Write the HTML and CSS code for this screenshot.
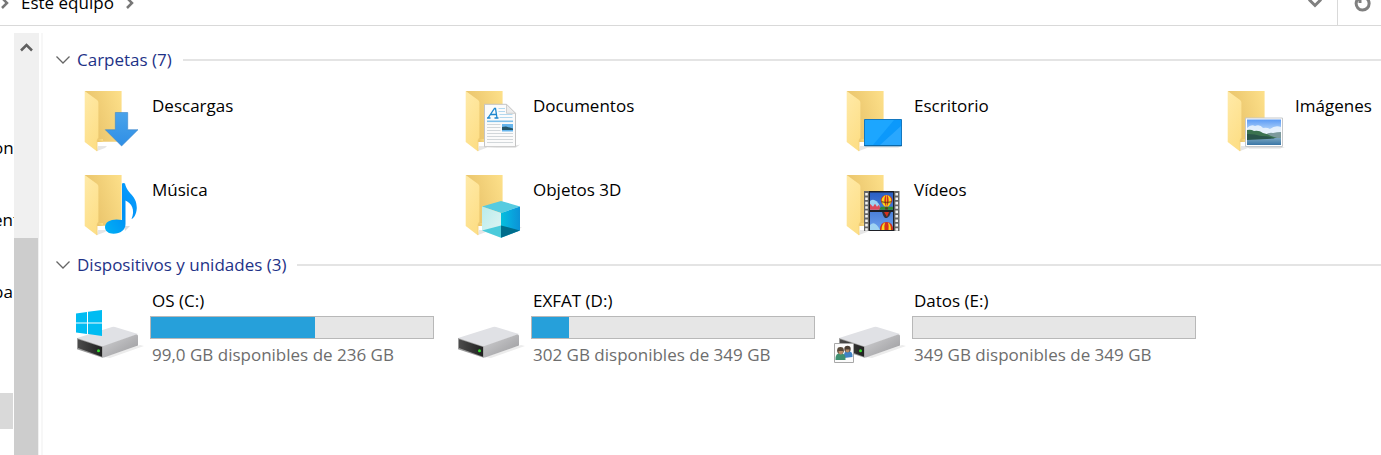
FILE: index.html
```html
<!DOCTYPE html>
<html lang="es">
<head>
  <meta charset="UTF-8">
  <meta name="viewport" content="width=device-width, initial-scale=1.0">
  <title>Este equipo</title>
  <link rel="stylesheet" href="styles.css">
</head>
<body>
  <!-- shared shapes -->
  <svg class="defs" aria-hidden="true">
    <defs>
      <linearGradient id="folderBack" x1="0" y1="0.4" x2="1" y2="0">
        <stop offset="0.1" stop-color="#eac56c"/>
        <stop offset="1" stop-color="#fde08a"/>
      </linearGradient>
      <linearGradient id="folderFront" x1="0" y1="0" x2="0.4" y2="1">
        <stop offset="0" stop-color="#ffeaa8"/>
        <stop offset="1" stop-color="#fddf88"/>
      </linearGradient>
      <linearGradient id="arrowBlue" x1="0" y1="0" x2="0" y2="1">
        <stop offset="0" stop-color="#4aa3ea"/>
        <stop offset="1" stop-color="#2f8fe6"/>
      </linearGradient>
      <linearGradient id="noteBlue" x1="0" y1="1" x2="1" y2="0">
        <stop offset="0" stop-color="#00b2f5"/>
        <stop offset="0.5" stop-color="#0090f5"/>
        <stop offset="1" stop-color="#0aa0ff"/>
      </linearGradient>
      <linearGradient id="sky" x1="0" y1="0" x2="0" y2="1">
        <stop offset="0" stop-color="#5b9bf5"/>
        <stop offset="0.6" stop-color="#d8ecfb"/>
      </linearGradient>
      <linearGradient id="lake" x1="0" y1="0" x2="0" y2="1">
        <stop offset="0" stop-color="#7fa9c2"/>
        <stop offset="1" stop-color="#3a76a6"/>
      </linearGradient>
      <linearGradient id="night" x1="0" y1="0" x2="0" y2="1">
        <stop offset="0" stop-color="#2b5fc4"/>
        <stop offset="1" stop-color="#6ba0ee"/>
      </linearGradient>
      <linearGradient id="cubeLeft" x1="0" y1="0" x2="1" y2="1">
        <stop offset="0" stop-color="#b9ecec"/>
        <stop offset="1" stop-color="#e2f5f3"/>
      </linearGradient>
      <linearGradient id="cubeRight" x1="0" y1="0" x2="1" y2="0">
        <stop offset="0" stop-color="#06bfdc"/>
        <stop offset="0.5" stop-color="#08a8de"/>
        <stop offset="1" stop-color="#0c92d6"/>
      </linearGradient>
      <linearGradient id="driveSide" x1="0" y1="0" x2="1" y2="1">
        <stop offset="0" stop-color="#d2d2d4"/>
        <stop offset="1" stop-color="#98989b"/>
      </linearGradient>
      <linearGradient id="driveFront" x1="0" y1="0" x2="1" y2="0">
        <stop offset="0" stop-color="#4c4c4c"/>
        <stop offset="1" stop-color="#202020"/>
      </linearGradient>
      <symbol id="folder" viewBox="0 0 70 70">
        <path d="M21 67l8-3 2-2h-9z" fill="#e6e6e6"/>
        <path d="M9 7h36.600v50.700H9z" fill="url(#folderBack)"/>
        <path d="M21 55h6v3h-6z" fill="url(#folderBack)"/>
        <path d="M8.700 7l12.400 9q1.300 1 1.300 2.500V54l-1.300 2v11.600L8.700 58z" fill="url(#folderFront)"/>
        <path d="M22.400 54l-1.300 2v11" fill="none" stroke="#f0cc74" stroke-width=".6"/>
      </symbol>
      <symbol id="drive" viewBox="0 0 70 78">
        <path d="M28 68l36-12 4 1-34 12z" fill="#ececec"/>
        <path d="M1 49l35-11q1.500-.5 3 0l23 7-35.500 13z" fill="#e0e1e5"/>
        <path d="M26 57.500L60 45.500q2-.5 2 1.500v9.500L28 68.500h-2z" fill="url(#driveSide)"/>
        <path d="M1 49l25.600 8.500v11.300L1 60.300z" fill="#9b9b9b"/>
        <path d="M2 50.300L26 58v9.800L2 59z" fill="url(#driveFront)"/>
        <circle cx="22.500" cy="61.700" r="1.500" fill="#35e02e"/>
      </symbol>
      <symbol id="balloon" viewBox="0 0 14 17">
        <path d="M7 0a6.500 6 0 0 1 6.500 6C13.500 9 10 11 9 13H5C4 11 .5 9 .5 6A6.500 6 0 0 1 7 0z" fill="#d6301c"/>
        <path d="M4.500.8C0 4 1 9 5 13h1.500C4 9 4 4 6 0zM9.500.8C14 4 13 9 9 13H7.500C10 9 10 4 8 0zM6.600 0h.8v13h-.8z" fill="#f7d71e"/>
        <path d="M1 6.500q6 2.500 12 0l-1 2q-5 1.500-10 0z" fill="#3c3110" opacity=".6"/>
        <path d="M5.500 14h3v2.500h-3z" fill="#5a3b16"/>
      </symbol>
    </defs>
  </svg>

  <header class="address-bar">
    <nav class="crumbs">
      <svg class="crumb-arrow" viewBox="0 0 10 12"><path d="M2 1l5 5-5 5"/></svg>
      <a href="#" class="crumb">Este equipo</a>
      <svg class="crumb-arrow" viewBox="0 0 10 12"><path d="M2 1l5 5-5 5"/></svg>
    </nav>
    <button class="bar-btn" aria-label="Ubicaciones anteriores">
      <svg width="16" height="12" viewBox="0 0 16 12"><path d="M2 2.500l6 6 6-6"/></svg>
    </button>
    <button class="bar-btn refresh" aria-label="Actualizar">
      <svg width="18" height="18" viewBox="0 0 18 18"><path d="M14 4.700A6.500 6.500 0 1 1 5.500 4.500M7 9V4.500H3"/></svg>
    </button>
  </header>

  <div class="window">
    <aside class="sidebar">
      <a href="#" class="nav-item">on</a>
      <a href="#" class="nav-item">ent</a>
      <a href="#" class="nav-item">pa</a>
      <span class="nav-selected"></span>
    </aside>
    <div class="scrollbar">
      <svg class="scroll-up" viewBox="0 0 13 10"><path d="M1 8.500L6.500 3 12 8.500"/></svg>
      <div class="thumb"></div>
    </div>

    <main class="content">
      <section class="group">
        <h2 class="group-title">
          <svg class="chevron" viewBox="0 0 14 8"><path d="M.5.500L7 7 13.500.500"/></svg>
          <span>Carpetas (7)</span>
        </h2>
        <div class="grid folders">
          <a href="#" class="tile">
            <svg class="icon" viewBox="0 0 70 70">
              <use href="#folder"/>
              <path d="M39.300 28.500h12.400v17.200H62L45.600 62 29.300 45.700h10z" fill="url(#arrowBlue)" stroke="#3c86cb" stroke-width=".6"/>
            </svg>
            <span>Descargas</span>
          </a>
          <a href="#" class="tile">
            <svg class="icon" viewBox="0 0 70 70">
              <use href="#folder"/>
              <path d="M57 62l6-1.500-4 3H30z" fill="#dedede"/>
              <path d="M27.500 20.300h22l9 9v33.400h-31z" fill="#fbfbfb" stroke="#c4c4c4"/>
              <path d="M49.500 20.300v9h9z" fill="#ececec" stroke="#c4c4c4" stroke-width=".8"/>
              <path d="M31 34l6.500-9.500h1L40 34M33.500 30.500h6M30 34h3.500M37.500 34h4" fill="none" stroke="#1e87cf" stroke-width="1.300"/>
              <path d="M41.500 24.500H48M41.500 27.500H48M42.500 30.500h13M42.500 33.500h13" stroke="#b3d8ee"/>
              <path d="M30 37.300h26" stroke="#7fc0ea" stroke-width="1.600"/>
              <path d="M30 40.500h13.500M30 43.500h13.500M30 46.500h13.500M30 49.500h26M30 52.500h26M30 55.500h26M30 58.500h26" stroke="#d2d7da"/>
              <path d="M45 40h11v7.500H45z" fill="#66b5ec"/>
              <path d="M45 43l4-.5 7 2v1.500H45z" fill="#24566b"/>
            </svg>
            <span>Documentos</span>
          </a>
          <a href="#" class="tile">
            <svg class="icon" viewBox="0 0 70 70">
              <use href="#folder"/>
              <path d="M27 62h38l-5 1.500H30z" fill="#dcdcdc"/>
              <path d="M26.500 35.500h37v26.300h-37z" fill="#0c99fb" stroke="#1478c0"/>
              <path d="M27 36h29L35 61h-8z" fill="#1ca6ff"/>
              <path d="M63 42v19H42z" fill="#36acff" opacity=".7"/>
              <path d="M26 61.500h38" stroke="#0b68a8"/>
            </svg>
            <span>Escritorio</span>
          </a>
          <a href="#" class="tile">
            <svg class="icon" viewBox="0 0 70 70">
              <use href="#folder"/>
              <path d="M28 63h38l-5 1.500H30z" fill="#dedede"/>
              <path d="M26.500 34h37v28.500h-37z" fill="#fff" stroke="#c5c8cb"/>
              <path d="M28 35.500h34V61H28z" fill="url(#sky)"/>
              <path d="M28 44q4-4 8-2 5-2 8 2 4-1 7 1 5-4 11-2v12H28z" fill="#eef6fd" opacity=".85"/>
              <path d="M28 53.500h34V61H28z" fill="url(#lake)"/>
              <path d="M46 51q4-3 8-2 4-1 8-1v6H42z" fill="#7c9a9c"/>
              <path d="M28 46q4-1 7 1 5-1 9 2 5 1 8 3l6 2H28z" fill="#3b7350"/>
              <path d="M28 50q8 0 14 2 8 0 14 2.500l-28 1.500z" fill="#28544a"/>
            </svg>
            <span>Imágenes</span>
          </a>
          <a href="#" class="tile">
            <svg class="icon" viewBox="0 0 70 70">
              <use href="#folder"/>
              <path d="M48 58h6l-5 5z" fill="#dcdcdc"/>
              <path d="M46 15.500q1.500-1 3 0C51 26 61 27 60.800 40 60.500 47 57 51 55.500 51c4-9 0-16-6-18.500V56c0 6-5 9.700-12 9.700-5 0-8.500-2.700-8.500-6.700 0-6 8-9 17-7z" fill="url(#noteBlue)"/>
            </svg>
            <span>Música</span>
          </a>
          <a href="#" class="tile">
            <svg class="icon" viewBox="0 0 70 70">
              <use href="#folder"/>
              <path d="M60 60l5-1-8 6-10 4z" fill="#e2e2e2"/>
              <path d="M25 38.500L44 33l19 5.500L44 45z" fill="#56cbe0"/>
              <path d="M25 38.500L44 45v24.700L25 62.500z" fill="url(#cubeLeft)"/>
              <path d="M63 38.500L44 45v24.700l19-7.200z" fill="url(#cubeRight)"/>
              <path d="M25 62.500L44 57.500v12.200z" fill="#4bcbdb"/>
              <path d="M63 62.500L44 57.500v12.200z" fill="#006d8c"/>
            </svg>
            <span>Objetos 3D</span>
          </a>
          <a href="#" class="tile">
            <svg class="icon" viewBox="0 0 70 70">
              <use href="#folder"/>
              <path d="M26 23h35.500v40H26z" fill="#666"/>
              <path d="M28.500 25v38M58.700 25v38" stroke="#f4f4f4" stroke-width="2.600" stroke-dasharray="2.600 1.800"/>
              <path d="M31 23h25v40H31z" fill="#1d1f26"/>
              <path d="M32 24.500h23v17.300H32zM32 44h23v18H32z" fill="url(#night)"/>
              <path d="M32 33q5-4 10 5v3.800H32z" fill="#9fd3f2"/>
              <path d="M32 41.800v-6l3 3 2-3 2 3 2-2 2 5z" fill="#dd4a5c"/>
              <path d="M41 41.800l2-3h12v3z" fill="#2f8a37"/>
              <use href="#balloon" x="42" y="27" width="13" height="15"/>
              <path d="M44 44h9q-1 4-4 6h-2q-2-2-3-6z" fill="#31323c"/>
              <path d="M46 44h5l-2 5z" fill="#d6301c"/>
              <path d="M32 62v-5q5-5 10 5z" fill="#9fd3f2"/>
              <path d="M42 62q0-8 6.500-8T55 62z" fill="#d6301c"/>
              <path d="M43.500 62q0-6 3.500-7.500-1 3-.5 7.500zM53 62q0-6-3-7.500 1 3 .5 7.500z" fill="#f7d71e"/>
            </svg>
            <span>Vídeos</span>
          </a>
        </div>
      </section>

      <section class="group">
        <h2 class="group-title">
          <svg class="chevron" viewBox="0 0 14 8"><path d="M.5.500L7 7 13.500.500"/></svg>
          <span>Dispositivos y unidades (3)</span>
        </h2>
        <div class="grid">
          <a href="#" class="tile drive">
            <svg class="icon drive-icon" viewBox="0 0 70 78">
              <use href="#drive"/>
              <path d="M0 24.500l11-1.600v10.600H0zM12 22.700L26 21v12.500H12zM0 34.500h11v10.400L0 43.400zM12 34.500h14v12.400l-14-1.800z" fill="#00bcf2"/>
            </svg>
            <div class="drive-info">
              <span>OS (C:)</span>
              <div class="bar"><div class="used" style="width: 58%"></div></div>
              <span class="free">99,0 GB disponibles de 236 GB</span>
            </div>
          </a>
          <a href="#" class="tile drive">
            <svg class="icon drive-icon" viewBox="0 0 70 78">
              <use href="#drive"/>
            </svg>
            <div class="drive-info">
              <span>EXFAT (D:)</span>
              <div class="bar"><div class="used" style="width: 13%"></div></div>
              <span class="free">302 GB disponibles de 349 GB</span>
            </div>
          </a>
          <a href="#" class="tile drive">
            <svg class="icon drive-icon" viewBox="0 0 70 78">
              <use href="#drive"/>
              <path d="M-3.500 54.500h19v19h-19z" fill="#fbfbfb" stroke="#a8a8a8"/>
              <path d="M6 69q-1-7 4-7t4.500 6z" fill="#3f82c4"/>
              <circle cx="9.500" cy="60" r="3.200" fill="#4a3e34"/>
              <path d="M7.500 60.500h4q0 3-2 3t-2-3z" fill="#b98d68"/>
              <path d="M-2.500 71q-.5-7 5-7t5 7z" fill="#3f9070"/>
              <circle cx="2.500" cy="61.500" r="3.400" fill="#57493a"/>
              <path d="M.5 62h4.500q0 3.500-2.200 3.500T.5 62z" fill="#b98d68"/>
            </svg>
            <div class="drive-info">
              <span>Datos (E:)</span>
              <div class="bar"></div>
              <span class="free">349 GB disponibles de 349 GB</span>
            </div>
          </a>
        </div>
      </section>
    </main>
  </div>
</body>
</html>
```
FILE: styles.css
```css
* {
  box-sizing: border-box;
}
body {
  margin: 0;
  height: 100vh;
  display: flex;
  flex-direction: column;
  overflow: hidden;
  background-color: #fff;
  color: #000;
  font-family: 'Open Sans', 'Noto Sans', sans-serif;
  font-size: 17px;
  line-height: 24px;
}
a {
  color: inherit;
  text-decoration: none;
}
.defs {
  position: absolute;
  width: 0;
  height: 0;
}

/* address bar, its top part is scrolled off */
.address-bar {
  flex: none;
  display: flex;
  align-items: flex-end;
  height: 26px;
  border-bottom: 1px solid #d9d9d9;
}
.crumbs {
  flex: 1;
  display: flex;
  align-items: center;
  gap: 11px;
  height: 44px;
}
.crumb-arrow {
  width: 10px;
  height: 12px;
  fill: none;
  stroke: #777;
  stroke-width: 2.5;
}
.bar-btn {
  display: flex;
  align-items: center;
  justify-content: center;
  width: 44px;
  height: 44px;
  padding: 0;
  border: none;
  background: none;
}
.bar-btn svg {
  fill: none;
  stroke: #808080;
  stroke-width: 3;
}
.bar-btn.refresh {
  padding-left: 4px;
  border-left: 1px solid #d9d9d9;
}

.window {
  flex: 1;
  display: flex;
  min-height: 0;
}
.sidebar {
  flex: none;
  display: flex;
  flex-direction: column;
  gap: 48px;
  width: 14px;
  padding-top: 110px;
  overflow: hidden;
}
.nav-item {
  height: 24px;
  margin-left: -7px;
  white-space: nowrap;
}
.nav-selected {
  width: 13px;
  height: 36px;
  margin-top: 41px;
  background-color: #d9d9d9;
}
.scrollbar {
  flex: none;
  width: 25px;
  margin-top: 7px;
  background-color: #f0f0f0;
  display: flex;
  flex-direction: column;
}
.scroll-up {
  width: 13px;
  height: 10px;
  margin: 9px 6px 186px;
  fill: none;
  stroke: #606060;
  stroke-width: 2.5;
}
.thumb {
  flex: 1;
  width: 24px;
  background-color: #cdcdcd;
}

.content {
  flex: 1;
  min-width: 0;
  margin: 7px 0 0 2px;
  padding: 15px 0 0 13px;
  border-left: 2px solid #f7f7f7;
  overflow: hidden;
}
.group {
  margin-bottom: 15px;
}
.group-title {
  display: flex;
  align-items: center;
  gap: 7px;
  margin: 0 0 12px;
  font-size: 17px;
  font-weight: normal;
  color: #1e3287;
}
.group-title::after {
  content: '';
  flex: 1;
  height: 2px;
  margin-left: 4px;
  background-color: #e4e4e4;
}
.chevron {
  width: 14px;
  height: 8px;
  fill: none;
  stroke: #666;
  stroke-width: 1.3;
}
.grid {
  display: grid;
  grid-template-columns: repeat(4, 381px);
  row-gap: 14px;
  padding-left: 20px;
}
.tile {
  display: flex;
  gap: 6px;
}
.folders span {
  padding-top: 10px;
}
.icon {
  flex: none;
  width: 70px;
  height: 70px;
  overflow: visible;
}
.drive {
  gap: 4px;
}
.drive-icon {
  height: 78px;
}
.drive-info {
  display: flex;
  flex-direction: column;
}
.drive-info span {
  padding-left: 2px;
}
.bar {
  width: 284px;
  height: 23px;
  margin: 3px 0 4px;
  border: 1px solid #b8b8b8;
  background-color: #e6e6e6;
}
.used {
  height: 100%;
  background-color: #26a0da;
}
.free {
  color: #6d6d6d;
}
```
